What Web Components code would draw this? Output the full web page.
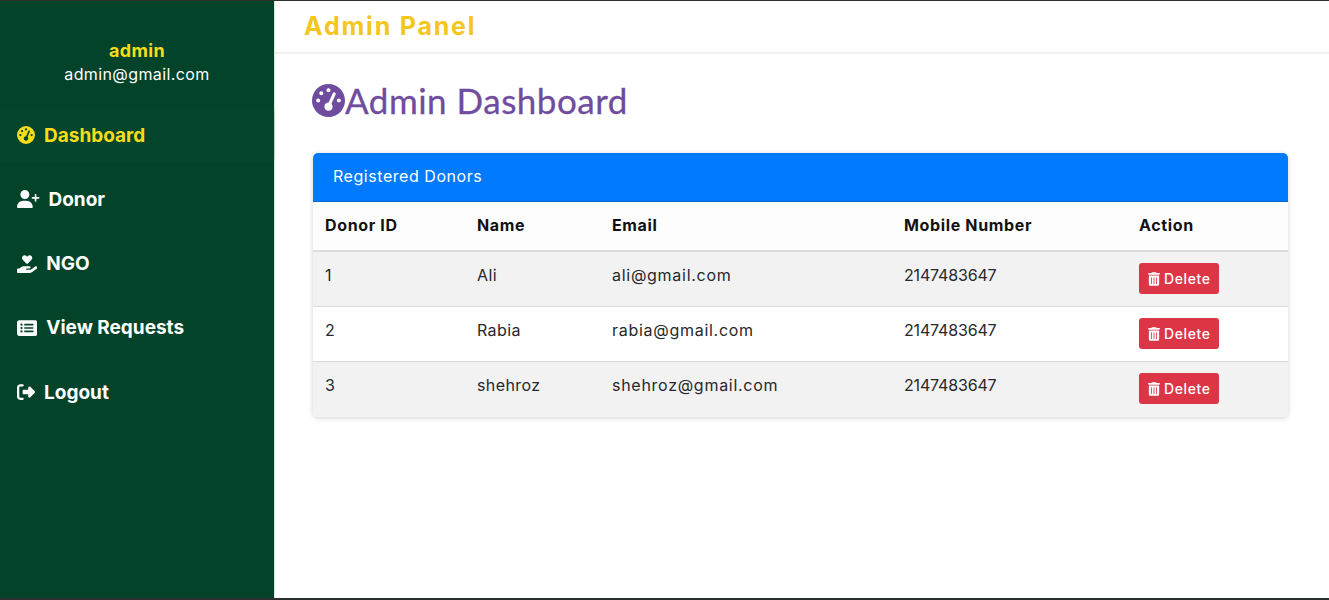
<!DOCTYPE html>
<html>
<head>
<meta charset="utf-8">
<title>Admin Dashboard</title>
<style>
  html, body { margin: 0; height: 100%; background: #fff; }
  body { font-family: "Inter", "Liberation Sans", sans-serif; }
</style>
</head>
<body>

<template id="icons">
  <svg data-name="gauge" viewBox="0 0 512 512"><path d="M0 256a256 256 0 1 1 512 0A256 256 0 1 1 0 256zM288 96a32 32 0 1 0 -64 0 32 32 0 1 0 64 0zM256 416c35.3 0 64-28.7 64-64c0-17.4-6.9-33.1-18.1-44.6L366 161.7c5.3-12.1-.2-26.3-12.3-31.6s-26.3 .2-31.6 12.3L257.9 288c-.6 0-1.3 0-1.9 0c-35.3 0-64 28.7-64 64s28.7 64 64 64zM176 144a32 32 0 1 0 -64 0 32 32 0 1 0 64 0zM96 288a32 32 0 1 0 0-64 32 32 0 1 0 0 64zm352-32a32 32 0 1 0 -64 0 32 32 0 1 0 64 0z"/></svg>
  <svg data-name="user-plus" viewBox="0 0 640 512"><path d="M96 128a128 128 0 1 1 256 0A128 128 0 1 1 96 128zM0 482.3C0 383.8 79.8 304 178.3 304h91.4C368.2 304 448 383.8 448 482.3c0 16.4-13.3 29.7-29.7 29.7H29.7C13.3 512 0 498.7 0 482.3zM504 312V248H440c-13.3 0-24-10.7-24-24s10.7-24 24-24h64V136c0-13.3 10.7-24 24-24s24 10.7 24 24v64h64c13.3 0 24 10.7 24 24s-10.7 24-24 24H552v64c0 13.3-10.7 24-24 24s-24-10.7-24-24z"/></svg>
  <svg data-name="hand-heart" viewBox="0 0 576 512"><path d="M163.9 136.9c-29.4-29.8-29.4-78.2 0-108s77-29.8 106.4 0l17.7 18 17.7-18c29.4-29.8 77-29.8 106.4 0s29.4 78.2 0 108L310.5 240.1c-6.2 6.3-14.3 9.4-22.5 9.4s-16.3-3.1-22.5-9.4L163.9 136.9zM568.2 336.3c13.1 17.8 9.3 42.8-8.5 55.9L433.1 485.5c-23.4 17.2-51.6 26.5-80.7 26.5H192 32c-17.7 0-32-14.3-32-32V416c0-17.7 14.3-32 32-32H68.8l44.9-36c22.7-18.2 50.9-28 80-28H272h16 64c17.7 0 32 14.3 32 32s-14.3 32-32 32H288 272c-8.8 0-16 7.2-16 16s7.2 16 16 16H392.6l119.7-88.2c17.8-13.1 42.8-9.3 55.9 8.5z"/></svg>
  <svg data-name="list" viewBox="0 0 576 512"><path d="M0 96C0 60.7 28.7 32 64 32H512c35.3 0 64 28.7 64 64V416c0 35.3-28.7 64-64 64H64c-35.3 0-64-28.7-64-64V96zM128 288a32 32 0 1 0 0-64 32 32 0 1 0 0 64zm32-128a32 32 0 1 0 -64 0 32 32 0 1 0 64 0zM128 384a32 32 0 1 0 0-64 32 32 0 1 0 0 64zm96-248c-13.3 0-24 10.7-24 24s10.7 24 24 24H448c13.3 0 24-10.7 24-24s-10.7-24-24-24H224zm0 96c-13.3 0-24 10.7-24 24s10.7 24 24 24H448c13.3 0 24-10.7 24-24s-10.7-24-24-24H224zm0 96c-13.3 0-24 10.7-24 24s10.7 24 24 24H448c13.3 0 24-10.7 24-24s-10.7-24-24-24H224z"/></svg>
  <svg data-name="logout" viewBox="0 0 512 512"><path d="M377.9 105.9L500.7 228.7c7.2 7.2 11.3 17.1 11.3 27.3s-4.1 20.1-11.3 27.3L377.9 406.1c-6.4 6.4-15 9.9-24 9.9c-18.7 0-33.9-15.2-33.9-33.9l0-62.1-128 0c-17.7 0-32-14.3-32-32l0-64c0-17.7 14.3-32 32-32l128 0 0-62.1c0-18.7 15.2-33.9 33.9-33.9c9 0 17.6 3.6 24 9.9zM160 96L96 96c-17.7 0-32 14.3-32 32l0 256c0 17.7 14.3 32 32 32l64 0c17.7 0 32 14.3 32 32s-14.3 32-32 32l-64 0c-53 0-96-43-96-96L0 128C0 75 43 32 96 32l64 0c17.7 0 32 14.3 32 32s-14.3 32-32 32z"/></svg>
  <svg data-name="trash" viewBox="0 0 448 512"><path d="M135.2 17.7C140.6 6.8 151.7 0 163.8 0H284.2c12.1 0 23.2 6.8 28.6 17.7L320 32h96c17.7 0 32 14.3 32 32s-14.3 32-32 32H32C14.3 96 0 81.7 0 64S14.3 32 32 32h96l7.2-14.3zM32 128H416V448c0 35.3-28.7 64-64 64H96c-35.3 0-64-28.7-64-64V128zm96 64c-8.8 0-16 7.2-16 16V432c0 8.8 7.2 16 16 16s16-7.2 16-16V208c0-8.8-7.2-16-16-16zm96 0c-8.8 0-16 7.2-16 16V432c0 8.8 7.2 16 16 16s16-7.2 16-16V208c0-8.8-7.2-16-16-16zm96 0c-8.8 0-16 7.2-16 16V432c0 8.8 7.2 16 16 16s16-7.2 16-16V208c0-8.8-7.2-16-16-16z"/></svg>
</template>

<admin-shell>
  <admin-sidebar slot="side" user="admin" email="admin@gmail.com">
    <side-link icon="gauge" active>Dashboard</side-link>
    <side-link icon="user-plus">Donor</side-link>
    <side-link icon="hand-heart">NGO</side-link>
    <side-link icon="list">View Requests</side-link>
    <side-link icon="logout">Logout</side-link>
  </admin-sidebar>

  <top-bar slot="top">Admin Panel</top-bar>

  <page-title>Admin Dashboard</page-title>

  <donor-card heading="Registered Donors">
    <donor-row head>
      <span>Donor ID</span><span>Name</span><span>Email</span><span>Mobile Number</span><span>Action</span>
    </donor-row>
    <donor-row striped>
      <span>1</span><span class="who">Ali</span><span class="mail">ali@gmail.com</span><span class="tel">2147483647</span><delete-button></delete-button>
    </donor-row>
    <donor-row>
      <span>2</span><span class="who">Rabia</span><span class="mail">rabia@gmail.com</span><span class="tel">2147483647</span><delete-button></delete-button>
    </donor-row>
    <donor-row striped last>
      <span>3</span><span class="who">shehroz</span><span class="mail">shehroz@gmail.com</span><span class="tel">2147483647</span><delete-button></delete-button>
    </donor-row>
  </donor-card>
</admin-shell>

<script>
const FONT = '"Inter", "Liberation Sans", sans-serif';

// copies one icon out of the template above
function icon(name) {
  const svg = document.getElementById("icons").content.querySelector(`[data-name="${name}"]`).cloneNode(true);
  svg.removeAttribute("data-name");
  svg.setAttribute("fill", "currentColor");
  return svg;
}

class AdminShell extends HTMLElement {
  constructor() {
    super();
    this.attachShadow({ mode: "open" });
    this.shadowRoot.innerHTML = `
      <style>
        :host { display: flex; height: 597px; border-top: 1px solid #2b2f2d; border-bottom: 2px solid #2b2f2d; font-family: ${FONT}; overflow: hidden; }
        .right { flex: 1; min-width: 0; display: flex; flex-direction: column; }
        main { padding: 22px 41px 0 37px; }
      </style>
      <slot name="side"></slot>
      <div class="right">
        <slot name="top"></slot>
        <main><slot></slot></main>
      </div>
    `;
  }
}

class AdminSidebar extends HTMLElement {
  constructor() {
    super();
    this.attachShadow({ mode: "open" });
  }
  connectedCallback() {
    this.shadowRoot.innerHTML = `
      <style>
        :host { display: block; width: 275px; flex: none; background: #03432a; color: #fff; box-sizing: border-box; border-right: 1px solid #dfe3e1; }
        .who { height: 108px; padding-top: 39px; box-sizing: border-box; text-align: center; }
        .name { color: #f7dc1a; font-size: 18px; font-weight: 700; line-height: 21px; letter-spacing: .3px; }
        .mail { font-size: 16px; line-height: 21px; margin-top: 3px; letter-spacing: .4px; }
        nav { display: flex; flex-direction: column; gap: 12.25px; }
      </style>
      <div class="who">
        <div class="name">${this.getAttribute("user")}</div>
        <div class="mail">${this.getAttribute("email")}</div>
      </div>
      <nav><slot></slot></nav>
    `;
  }
}

class SideLink extends HTMLElement {
  constructor() {
    super();
    this.attachShadow({ mode: "open" });
  }
  connectedCallback() {
    this.shadowRoot.innerHTML = `
      <style>
        :host { display: flex; align-items: center; gap: 9px; height: 52px; padding-left: 17px; color: #fff; font-size: 19px; font-weight: 700; box-sizing: border-box; }
        :host([active]) { color: #f7dc1a; background: #04452b; box-shadow: 0 0 2px rgba(30, 90, 50, .45); border-radius: 4px; }
        svg { height: 18px; width: auto; flex: none; }
      </style>
      <span id="i" style="display:flex"></span><slot></slot>
    `;
    this.shadowRoot.getElementById("i").appendChild(icon(this.getAttribute("icon")));
  }
}

class TopBar extends HTMLElement {
  constructor() {
    super();
    this.attachShadow({ mode: "open" });
    this.shadowRoot.innerHTML = `
      <style>
        :host { display: flex; align-items: center; height: 53px; padding: 0 0 2px 29px; box-sizing: border-box; border-bottom: 2px solid #f1f1f1; color: #f5c61d; font-size: 25px; font-weight: 700; letter-spacing: 1.8px; }
      </style>
      <slot></slot>
    `;
  }
}

class PageTitle extends HTMLElement {
  constructor() {
    super();
    this.attachShadow({ mode: "open" });
    this.shadowRoot.innerHTML = `
      <style>
        :host { display: flex; align-items: center; height: 48px; color: #6f4c9e; font-family: "Lato", sans-serif; font-size: 35px; letter-spacing: .5px; margin-bottom: 29px; -webkit-text-stroke: .3px #6f4c9e; }
        svg { width: 33px; height: 33px; flex: none; }
      </style>
      <span id="i" style="display:flex"></span><slot></slot>
    `;
    this.shadowRoot.getElementById("i").appendChild(icon("gauge"));
  }
}

class DonorCard extends HTMLElement {
  constructor() {
    super();
    this.attachShadow({ mode: "open" });
  }
  connectedCallback() {
    this.shadowRoot.innerHTML = `
      <style>
        :host { display: block; margin-left: 1px; border-radius: 5px; box-shadow: 0 1px 5px rgba(0, 0, 0, .18); background: #fff; overflow: hidden; }
        .head { height: 49px; display: flex; align-items: center; padding: 0 0 2px 20px; background: #007bff; border-bottom: 1px solid #0a66c8; box-sizing: border-box; color: #fff; font-size: 16px; letter-spacing: .55px; }
      </style>
      <div class="head">${this.getAttribute("heading")}</div>
      <slot></slot>
    `;
  }
}

class DonorRow extends HTMLElement {
  constructor() {
    super();
    this.attachShadow({ mode: "open" });
    this.shadowRoot.innerHTML = `
      <style>
        :host { display: grid; grid-template-columns: 152px 135px 292px 235px 161px; height: 55px; box-sizing: border-box; padding-top: 11px; border-bottom: 1px solid #dadcde; color: #26282b; font-size: 16px; line-height: 24px; letter-spacing: .4px; }
        :host([head]) { height: 50px; background: #fdfdfd; color: #111; font-weight: 700; border-bottom-width: 2px; letter-spacing: .65px; }
        :host([striped]) { background: #f2f2f2; }
        :host([last]) { border-bottom: 0; }
        ::slotted(*) { padding-left: 12px; }
        ::slotted(.mail) { letter-spacing: .72px; }
        ::slotted(.tel) { letter-spacing: -.17px; }
      </style>
      <slot></slot>
    `;
  }
}

class DeleteButton extends HTMLElement {
  constructor() {
    super();
    this.attachShadow({ mode: "open" });
    this.shadowRoot.innerHTML = `
      <style>
        :host { display: block; }
        button { display: flex; align-items: center; gap: 4px; width: 80px; height: 31px; padding: 0 0 0 9px; border: 0; border-radius: 3px; background: #dc3545; color: #fff; font: 500 14px ${FONT}; letter-spacing: .6px; }
        svg { width: 12px; height: 14px; }
      </style>
      <button><span id="i" style="display:flex"></span>Delete</button>
    `;
    this.shadowRoot.getElementById("i").appendChild(icon("trash"));
  }
}

customElements.define("admin-shell", AdminShell);
customElements.define("admin-sidebar", AdminSidebar);
customElements.define("side-link", SideLink);
customElements.define("top-bar", TopBar);
customElements.define("page-title", PageTitle);
customElements.define("donor-card", DonorCard);
customElements.define("donor-row", DonorRow);
customElements.define("delete-button", DeleteButton);
</script>
</body>
</html>
